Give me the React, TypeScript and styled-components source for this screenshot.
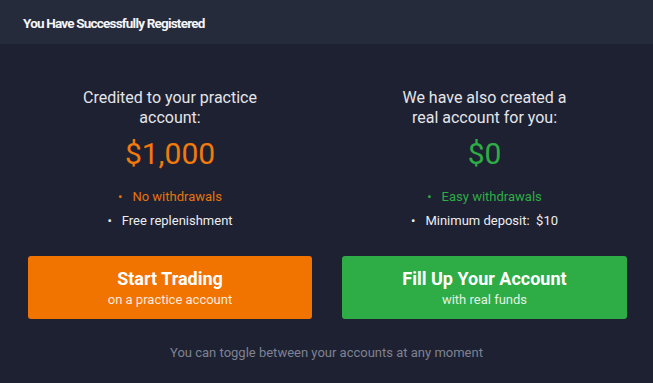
import React from "react";
import styled, { createGlobalStyle } from "styled-components";

const Global = createGlobalStyle`
  html, body { margin: 0; padding: 0; background: #1e2131; }
  body { font-family: Roboto, "Noto Sans", Arial, sans-serif; -webkit-font-smoothing: antialiased; }
`;

const Modal = styled.div`
  width: 653px;
  height: 383px;
  background: #1e2131;
  display: flex;
  flex-direction: column;
  overflow: hidden;
`;

const Header = styled.div`
  height: 44px;
  background: #262b3c;
  display: flex;
  align-items: center;
  padding: 1px 23px 0;
  box-sizing: border-box;
`;

const Title = styled.h1`
  margin: 0;
  font-size: 13.5px;
  font-weight: 700;
  color: #f4f5f8;
  letter-spacing: -0.8px;
`;

const Columns = styled.div`
  display: grid;
  grid-template-columns: 284px 285px;
  column-gap: 30px;
  padding: 44px 26px 0 28px;
`;

const Column = styled.div`
  display: flex;
  flex-direction: column;
  align-items: center;
`;

const Lead = styled.p`
  margin: 0;
  font-size: 16px;
  line-height: 20px;
  color: #e4e5ea;
  text-align: center;
  max-width: 190px;
`;

const Amount = styled.div<{ $color: string }>`
  margin-top: 8px;
  font-size: 30px;
  line-height: 36px;
  color: ${(p) => p.$color};
`;

const List = styled.ul`
  list-style: none;
  margin: 17px 0 0;
  padding: 0;
  display: flex;
  flex-direction: column;
  align-items: center;
  gap: 9px;
`;

const Item = styled.li<{ $color: string }>`
  font-size: 13px;
  line-height: 15px;
  color: ${(p) => p.$color};
  display: flex;
  gap: 10px;
  &::before {
    content: "•";
  }
`;

const Button = styled.button<{ $bg: string }>`
  margin-top: 28px;
  width: 100%;
  height: 63px;
  border: none;
  border-radius: 3px;
  background: ${(p) => p.$bg};
  color: #fff;
  font-family: inherit;
  display: flex;
  flex-direction: column;
  align-items: center;
  justify-content: center;
  cursor: pointer;
  padding: 0;
`;

const ButtonTitle = styled.span`
  font-size: 18px;
  line-height: 22px;
  font-weight: 700;
`;

const ButtonSub = styled.span`
  font-size: 13px;
  line-height: 17px;
  opacity: 0.85;
  margin-top: 1px;
`;

const Footer = styled.p`
  margin: 26px 0 0;
  text-align: center;
  font-size: 13px;
  color: #7f8292;
`;

export default function App() {
  return (
    <>
      <Global />
      <Modal>
        <Header>
          <Title>You Have Successfully Registered</Title>
        </Header>
        <Columns>
          <Column>
            <Lead>Credited to your practice account:</Lead>
            <Amount $color="#f27a0c">$1,000</Amount>
            <List>
              <Item $color="#e6740e">No withdrawals</Item>
              <Item $color="#eceef2">Free replenishment</Item>
            </List>
            <Button $bg="#f17300">
              <ButtonTitle>Start Trading</ButtonTitle>
              <ButtonSub>on a practice account</ButtonSub>
            </Button>
          </Column>
          <Column>
            <Lead>We have also created a real account for you:</Lead>
            <Amount $color="#2ead46">$0</Amount>
            <List>
              <Item $color="#2ead46">Easy withdrawals</Item>
              <Item $color="#eceef2">Minimum deposit:&nbsp; $10</Item>
            </List>
            <Button $bg="#2eac46">
              <ButtonTitle>Fill Up Your Account</ButtonTitle>
              <ButtonSub>with real funds</ButtonSub>
            </Button>
          </Column>
        </Columns>
        <Footer>You can toggle between your accounts at any moment</Footer>
      </Modal>
    </>
  );
}
